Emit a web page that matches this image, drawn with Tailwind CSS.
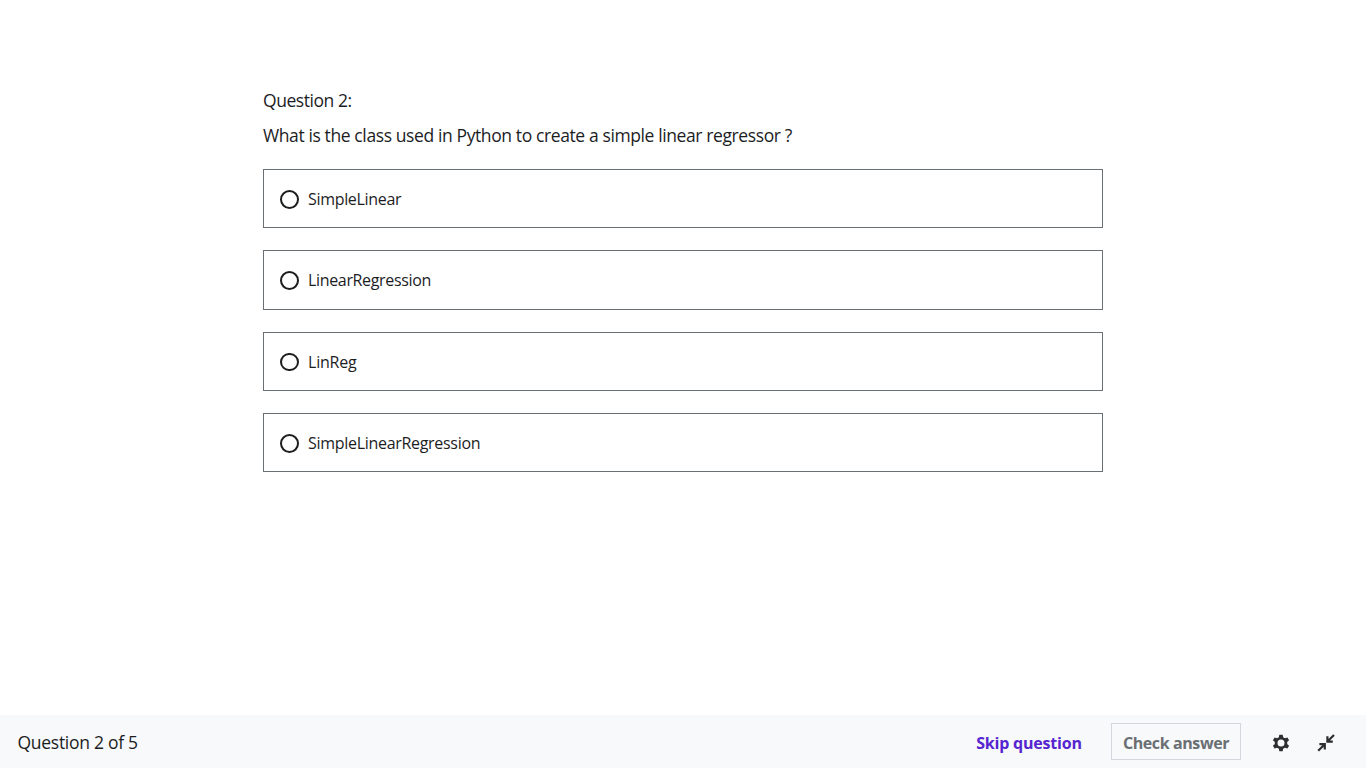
<!DOCTYPE html>
<html lang="en">
<head>
<meta charset="utf-8">
<title>Question 2</title>
<script src="https://cdn.jsdelivr.net/npm/@tailwindcss/browser@4"></script>
</head>
<body class="flex h-screen flex-col overflow-hidden bg-white font-['Segoe_UI','Open_Sans',sans-serif] text-[#1c1d1f]">
<main class="mx-auto w-[840px] flex-1 pt-[88px]">
  <p class="h-[35px] text-[17.5px] leading-[25px] tracking-[-0.44px] whitespace-nowrap">Question 2:</p>
  <p class="h-[46px] text-[17.5px] leading-[25px] tracking-[-0.39px] whitespace-nowrap">What is the class used in Python to create a simple linear regressor ?</p>
  <div class="flex flex-col gap-[22px]">
    <label class="flex h-[59px] items-center border border-[#6a6f73] pl-4 text-base"><span class="mt-0.5 mr-[9px] h-[19px] w-[19px] rounded-full border-2 border-[#1c1d1f]"></span><span class="tracking-[-0.32px]">SimpleLinear</span></label>
    <label class="flex h-[60px] items-center border border-[#6a6f73] pl-4 text-base"><span class="mt-px mr-[9px] h-[19px] w-[19px] rounded-full border-2 border-[#1c1d1f]"></span><span class="tracking-[-0.34px]">LinearRegression</span></label>
    <label class="flex h-[59px] items-center border border-[#6a6f73] pl-4 text-base"><span class="mt-px mr-[9px] h-[18px] w-[19px] rounded-full border-2 border-[#1c1d1f]"></span><span class="tracking-[-0.2px]">LinReg</span></label>
    <label class="flex h-[59px] items-center border border-[#6a6f73] pl-4 text-base"><span class="mt-0.5 mr-[9px] h-[19px] w-[19px] rounded-full border-2 border-[#1c1d1f]"></span><span class="tracking-[-0.3px]">SimpleLinearRegression</span></label>
  </div>
</main>
<footer class="flex h-[53px] items-center bg-[#f7f9fa] pl-[17.5px] pr-[30px]">
  <span class="pt-px text-[17.5px] tracking-[-0.28px]">Question 2 of 5</span>
  <div class="ml-auto flex items-center">
    <button class="mr-[29px] w-[106px] pt-[2px] text-base font-bold whitespace-nowrap tracking-[-0.2px] text-[#5624d0]">Skip question</button>
    <button class="h-[37px] w-[130px] border border-[#d1d7dc] pt-[2px] text-base font-bold whitespace-nowrap tracking-[-0.4px] text-[#6a6f73]">Check answer</button>
    <button class="mt-[2px] ml-[30px]" aria-label="Settings"><svg class="block h-5 w-5" viewBox="0 0 24 24" fill="#2d2f31"><path d="M10 2h4l.6 3 2.200 1.300 2.900-1 2 3.500-2.300 2a8 8 0 0 1 0 2.400l2.300 2-2 3.500-2.900-1-2.200 1.300-.6 3h-4l-.6-3-2.200-1.300-2.900 1-2-3.500 2.300-2a8 8 0 0 1 0-2.400l-2.300-2 2-3.500 2.900 1L9.400 5zM12 7.800a4.200 4.200 0 1 0 0 8.400 4.200 4.200 0 0 0 0-8.400z" fill-rule="evenodd"/></svg></button>
    <button class="mt-[2px] ml-[25px]" aria-label="Exit expanded view"><svg class="block h-5 w-5" viewBox="0 0 20 20" fill="none" stroke="#2d2f31" stroke-width="2.2"><path d="M2.200 17.800 8 12M3.400 11.200h5.400v5.400M18 2l-5.800 5.800M11.400 3.200v5.400h5.400"/></svg></button>
  </div>
</footer>
</body>
</html>
